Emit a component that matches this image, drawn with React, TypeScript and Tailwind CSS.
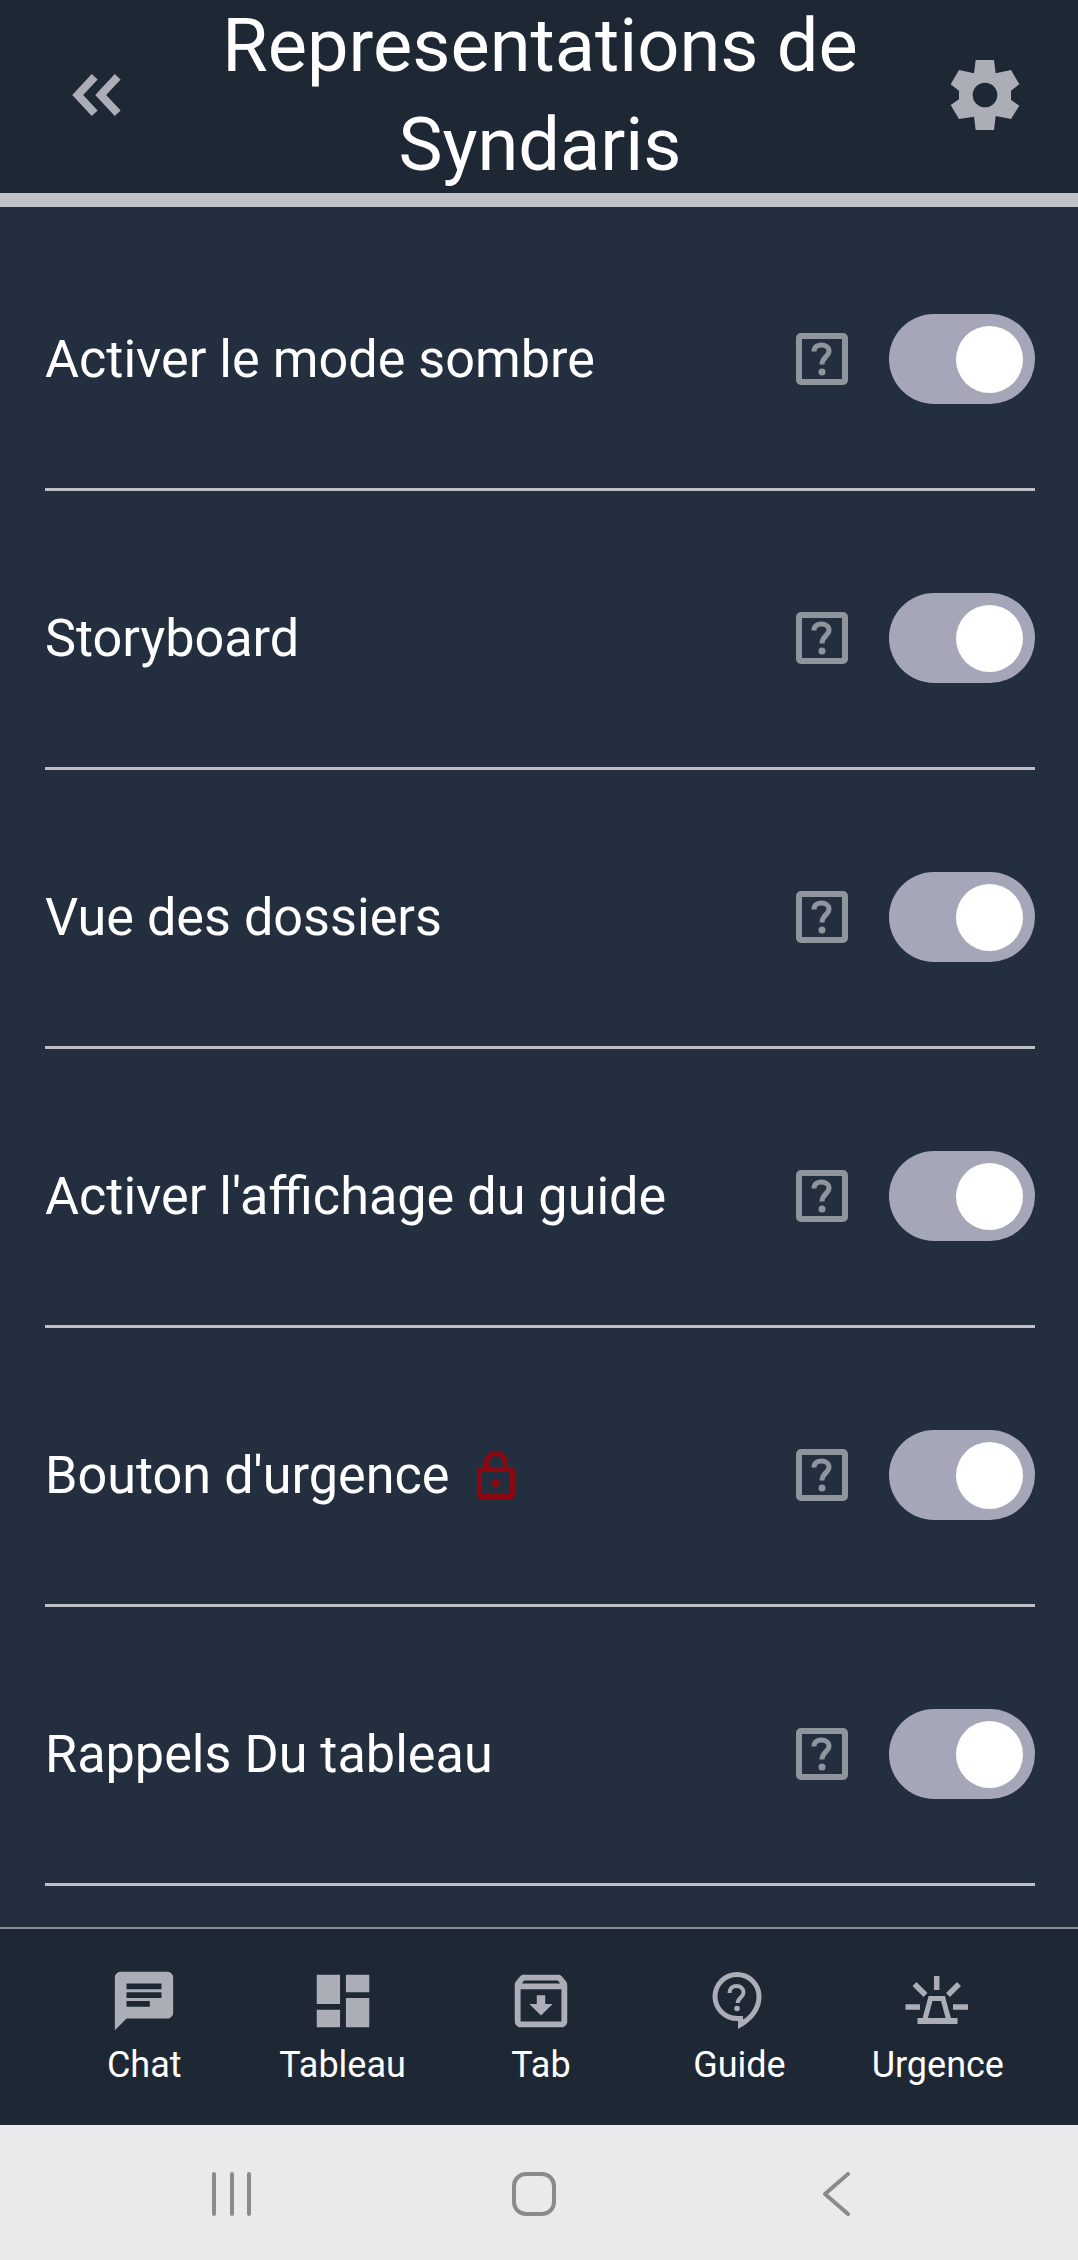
import React from 'react';

const settings = [
  { label: 'Activer le mode sombre' },
  { label: 'Storyboard' },
  { label: 'Vue des dossiers' },
  { label: "Activer l'affichage du guide" },
  { label: "Bouton d'urgence", locked: true },
  { label: 'Rappels Du tableau' },
];

function ChatIcon() {
  return (
    <svg viewBox="0 0 24 24" className="w-[70px] h-[70px]" fill="#abaeb6">
      <path d="M20 2H4c-1.1 0-1.99.9-1.99 2L2 22l4-4h14c1.1 0 2-.9 2-2V4c0-1.1-.9-2-2-2zM6 9h12v2H6V9zm8 5H6v-2h8v2zm4-6H6V6h12v2z" />
    </svg>
  );
}

function DashboardIcon() {
  return (
    <svg viewBox="0 0 24 24" className="w-[70px] h-[70px]" fill="#abaeb6">
      <path d="M3 13h8V3H3v10zm0 8h8v-6H3v6zm10 0h8V11h-8v10zm0-18v6h8V3h-8z" />
    </svg>
  );
}

function ArchiveIcon() {
  return (
    <svg viewBox="0 0 24 24" className="w-[70px] h-[70px]" fill="#abaeb6">
      <path d="M20.54 5.23l-1.39-1.68C18.88 3.21 18.47 3 18 3H6c-.47 0-.88.21-1.16.55L3.46 5.23C3.17 5.57 3 6.02 3 6.5V19c0 1.1.9 2 2 2h14c1.1 0 2-.9 2-2V6.5c0-.48-.17-.93-.46-1.27zM6.24 5h11.52l.81.97H5.44l.8-.97zM5 19V8h14v11H5zm8.45-9h-2.9v3H8l4 4 4-4h-2.55z" />
    </svg>
  );
}

function GuideIcon() {
  return (
    <svg viewBox="0 0 70 70" className="w-[70px] h-[70px]" fill="#abaeb6">
      <path fillRule="evenodd" d="M33 6a24.500 24.500 0 0 0 0 49h1v8c9-4.500 23.500-15 23.500-32.500A24.500 24.500 0 0 0 33 6zm0 5a19.500 19.500 0 0 1 19.500 19.500c0 10-6 18.500-13.500 23V50h-6a19.500 19.500 0 0 1 0-39z" />
      <path d="M25.500 27c0-4.500 3.200-7 7-7s7 2.500 7 6.500c0 5-5.800 5-5.800 10.500" fill="none" stroke="#abaeb6" strokeWidth="4" />
      <circle cx="33" cy="42.500" r="2.800" />
    </svg>
  );
}

function SirenIcon() {
  return (
    <svg viewBox="0 0 70 70" className="w-[70px] h-[70px]" fill="none" stroke="#abaeb6" strokeWidth="5.500">
      <path d="M33.700 10v14M11.500 18l11 11M56 18L45 29M2.500 41H17M50 41h15" />
      <path d="M22 53l5.500-20.500h12.500L45.500 53" strokeWidth="5" />
      <path d="M14.500 55h40" strokeWidth="6" />
    </svg>
  );
}

function HelpIcon() {
  return (
    <svg viewBox="0 0 52 52" className="w-[52px] h-[52px] shrink-0" fill="none" stroke="#8f959c">
      <rect x="3" y="3" width="46" height="46" rx="2" strokeWidth="6" />
      <path d="M18 18.500c0-4.500 3.400-6.500 7.500-6.500S33 14.500 33 18c0 5.500-7 6-7 13.500" strokeWidth="5" />
      <circle cx="26" cy="39" r="3.500" fill="#8f959c" stroke="none" />
    </svg>
  );
}

function LockIcon() {
  return (
    <svg viewBox="0 0 38 48" className="w-[38px] h-[48px] ml-[28px] shrink-0" fill="none" stroke="#8c0710" strokeWidth="5">
      <rect x="2.500" y="18.500" width="33" height="27" rx="2" />
      <path d="M9.500 18v-6a9.500 9.500 0 0 1 19 0v6" />
      <circle cx="19" cy="32" r="4" fill="#8c0710" stroke="none" />
    </svg>
  );
}

function Toggle() {
  return (
    <div className="w-[146px] h-[90px] rounded-full bg-[#a5a7b9] flex items-center justify-end pr-[12px] shrink-0">
      <div className="w-[67px] h-[67px] rounded-full bg-white" />
    </div>
  );
}

const navItems = [
  { label: 'Chat', icon: <ChatIcon /> },
  { label: 'Tableau', icon: <DashboardIcon /> },
  { label: 'Tab', icon: <ArchiveIcon /> },
  { label: 'Guide', icon: <GuideIcon /> },
  { label: 'Urgence', icon: <SirenIcon /> },
];

export default function App() {
  return (
    <div className="w-[1078px] h-[2260px] flex flex-col overflow-hidden bg-[#232e3f] text-white font-['Roboto',sans-serif]">
      {/* Header */}
      <header className="h-[193px] shrink-0 bg-[#1e2734] flex items-center pl-[71px] pr-[38px]">
        <svg viewBox="0 0 50 44" className="w-[50px] h-[44px] shrink-0 mb-[3px]" fill="none" stroke="#abaeb6" strokeWidth="8">
          <path d="M23.700 3.700L6.700 22l17 18.300M46.700 3.700L29.700 22l17 18.300" />
        </svg>
        <h1 className="flex-1 text-center text-[74px] leading-[99px] pl-[89px] pr-[60px] pb-[3px]">Representations de Syndaris</h1>
        <svg viewBox="0 0 330 300" className="w-[110px] h-[100px] shrink-0 mb-[3px]">
          <path
            fill="#abaeb6"
            fillRule="evenodd"
            d="M137 45H192L197 85L243 75L268 118L243 137V165L268 182L243 222L197 213L192 255H137L132 215L87 222L62 180L87 163V137L62 118L87 75L132 85ZM165 113a37 37 0 1 0 0 74a37 37 0 1 0 0-74Z"
          />
        </svg>
      </header>
      <div className="h-[14px] shrink-0 bg-[#bfc2c7]" />

      {/* Settings list */}
      <main className="flex-1 min-h-0 overflow-hidden pt-[5px] pl-[45px] pr-[43px]">
        {settings.map((item) => (
          <div key={item.label} className="pt-[102px] pb-[84px] border-b-[3px] border-[#bdbfc4] flex items-center">
            <span className="text-[52.2px] leading-[88px] pt-[2px] whitespace-nowrap">{item.label}</span>
            {item.locked && <LockIcon />}
            <div className="ml-auto mr-[41px]">
              <HelpIcon />
            </div>
            <Toggle />
          </div>
        ))}
      </main>

      {/* Bottom tabs */}
      <nav className="h-[198px] shrink-0 bg-[#1e2734] border-t-[2px] border-[#8a8f96] grid grid-cols-5 pl-[45px] pr-[41px] pt-[37px]">
        {navItems.map((item) => (
          <div key={item.label} className="flex flex-col items-center">
            {item.icon}
            <span className="text-[36px] leading-[42px] mt-[8px] text-white">{item.label}</span>
          </div>
        ))}
      </nav>

      {/* Android system bar */}
      <div className="h-[135px] shrink-0 bg-[#e9eaec] grid grid-cols-[302px_302px_302px] pl-[81px] pt-[2px] items-center">
        <svg viewBox="0 0 44 44" className="w-[44px] h-[44px] justify-self-center" fill="none" stroke="#8a8c8c" strokeWidth="4" strokeLinecap="round">
          <path d="M4 2v40M22 2v40M39 2v40" />
        </svg>
        <svg viewBox="0 0 44 44" className="w-[44px] h-[44px] justify-self-center" fill="none" stroke="#8a8c8c" strokeWidth="4">
          <rect x="2" y="2" width="40" height="40" rx="12" />
        </svg>
        <svg viewBox="0 0 44 44" className="w-[44px] h-[44px] justify-self-center" fill="none" stroke="#8a8c8c" strokeWidth="4" strokeLinecap="round" strokeLinejoin="round">
          <path d="M34 2L11 22l23 20" />
        </svg>
      </div>
    </div>
  );
}
